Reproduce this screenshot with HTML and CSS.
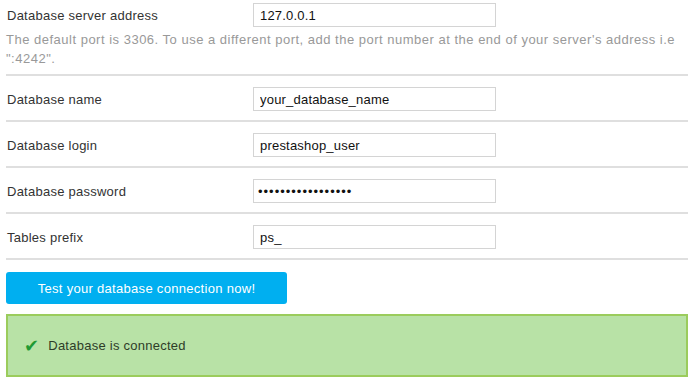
FILE: index.html
```html
<!DOCTYPE html>
<html>
<head>
	<meta http-equiv="Content-Type" content="text/html; charset=UTF-8" />
	<title>Database configuration</title>
<link rel="stylesheet" href="styles.css">
</head>
<body>
	<div id="dbform">
		<div class="field first">
			<div class="row">
				<label for="dbServer">Database server address</label>
				<input type="text" id="dbServer" value="127.0.0.1">
			</div>
			<p class="hint">The default port is 3306. To use a different port, add the port number at the end of your server's address i.e ":4242".</p>
		</div>
		<div class="field">
			<div class="row">
				<label for="dbName">Database name</label>
				<input type="text" id="dbName" value="your_database_name">
			</div>
		</div>
		<div class="field">
			<div class="row">
				<label for="dbLogin">Database login</label>
				<input type="text" id="dbLogin" value="prestashop_user">
			</div>
		</div>
		<div class="field">
			<div class="row">
				<label for="dbPassword">Database password</label>
				<input type="password" id="dbPassword" class="pwd" value="secretpassword123">
			</div>
		</div>
		<div class="field">
			<div class="row">
				<label for="dbPrefix">Tables prefix</label>
				<input type="text" id="dbPrefix" value="ps_">
			</div>
		</div>
		<button id="btTestDB" type="button">Test your database connection now!</button>
		<div id="dbResultCheck" class="okBlock">
			<span class="tick">&#10004;</span>Database is connected
		</div>
	</div>
</body>
</html>
```

FILE: styles.css
```css
body{
	margin: 0;
	background-color: #ffffff;
	color: #333333;
	font-family: "Liberation Sans", Arial, sans-serif;
	font-size: 13px;
	letter-spacing: 0.25px;
}
#dbform{
	padding: 0 6px;
}
.field{
	border-bottom: 2px solid #dfdfdf;
	padding: 11px 0 9px 0;
}
.field.first{
	padding-top: 3px;
	padding-bottom: 6px;
}
.field:last-of-type{
	padding-bottom: 10px;
}
.row{
	display: flex;
	align-items: center;
}
label{
	width: 246px;
	padding-left: 1px;
}
input{
	box-sizing: border-box;
	width: 243px;
	height: 24px;
	margin: 0;
	padding: 0 6px;
	border: 1px solid #d4d4d4;
	font-family: "Liberation Sans", Arial, sans-serif;
	font-size: 13px;
	letter-spacing: 0.2px;
	color: #111111;
	outline: none;
}
input.pwd{
	padding-left: 4px;
	letter-spacing: 1px;
}
.hint{
	margin: 3px 0 0 0;
	color: #999999;
	font-size: 13px;
	line-height: 19px;
	letter-spacing: 0.5px;
}
#btTestDB{
	display: block;
	margin-top: 12px;
	width: 281px;
	height: 32px;
	background: #00aff0;
	border: 0;
	border-radius: 3px;
	color: #ffffff;
	font-family: "Liberation Sans", Arial, sans-serif;
	font-size: 13px;
	letter-spacing: 0.3px;
}
.okBlock{
	margin-top: 10px;
	height: 59px;
	display: flex;
	align-items: center;
	background: #b8e2a6;
	border: 2px solid #9bcc5c;
	color: #2e3d28;
	padding-left: 16px;
}
.tick{
	color: #1f9a33;
	font-size: 18px;
	margin-right: 9px;
}
```
